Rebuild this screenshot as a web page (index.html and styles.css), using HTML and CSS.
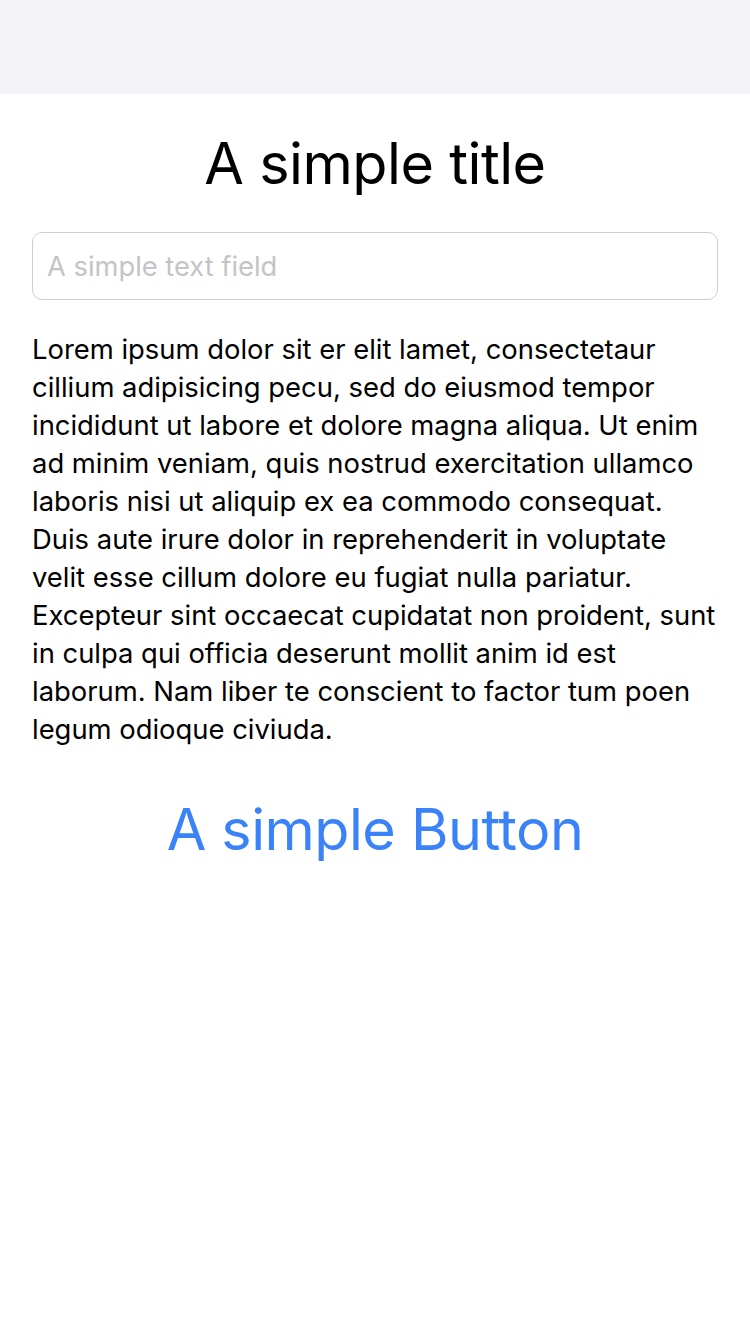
FILE: index.html
```html
<!DOCTYPE html>
<html>
<head>
<meta charset="utf-8">
<link rel="stylesheet" href="styles.css">
</head>
<body>
<div class="statusbar"></div>
<main class="content">
  <h1 class="title">A simple title</h1>
  <input class="field" type="text" placeholder="A simple text field">
  <p class="body">Lorem ipsum dolor sit er elit lamet, consectetaur cillium adipisicing pecu, sed do eiusmod tempor incididunt ut labore et dolore magna aliqua. Ut enim ad minim veniam, quis nostrud exercitation ullamco laboris nisi ut aliquip ex ea commodo consequat. Duis aute irure dolor in reprehenderit in voluptate velit esse cillum dolore eu fugiat nulla pariatur. Excepteur sint occaecat cupidatat non proident, sunt in culpa qui officia deserunt mollit anim id est laborum. Nam liber te conscient to factor tum poen legum odioque civiuda.</p>
  <button class="btn" type="button">A simple Button</button>
</main>
</body>
</html>
```
FILE: styles.css
```css
html, body {
  margin: 0;
  padding: 0;
  background: #ffffff;
  font-family: Inter, "Liberation Sans", sans-serif;
  width: 750px;
  height: 1334px;
  overflow: hidden;
}
.statusbar {
  height: 94px;
  background: #f2f2f7;
}
.content {
  display: flex;
  flex-direction: column;
  padding: 0 32px;
}
.title {
  margin: 34px 0 0;
  height: 70px;
  line-height: 70px;
  font-size: 57.5px;
  font-weight: 400;
  text-align: center;
  color: #000;
  letter-spacing: -0.5px;
}
.field {
  margin-top: 34px;
  box-sizing: border-box;
  height: 68px;
  width: 686px;
  border: 1px solid #cfcfd1;
  border-radius: 10px;
  padding: 0 14px;
  font-family: Inter, "Liberation Sans", sans-serif;
  font-size: 27.3px;
  color: #000;
  outline: none;
}
.field::placeholder {
  color: #c4c4c6;
}
.body {
  margin: 30px 0 0;
  font-size: 27.4px;
  line-height: 38px;
  color: #000;
}
.btn {
  margin-top: 46px;
  align-self: center;
  background: none;
  border: none;
  padding: 0;
  font-family: Inter, "Liberation Sans", sans-serif;
  font-size: 57.4px;
  line-height: 70px;
  color: #3a82f7;
  letter-spacing: -0.5px;
}
```
